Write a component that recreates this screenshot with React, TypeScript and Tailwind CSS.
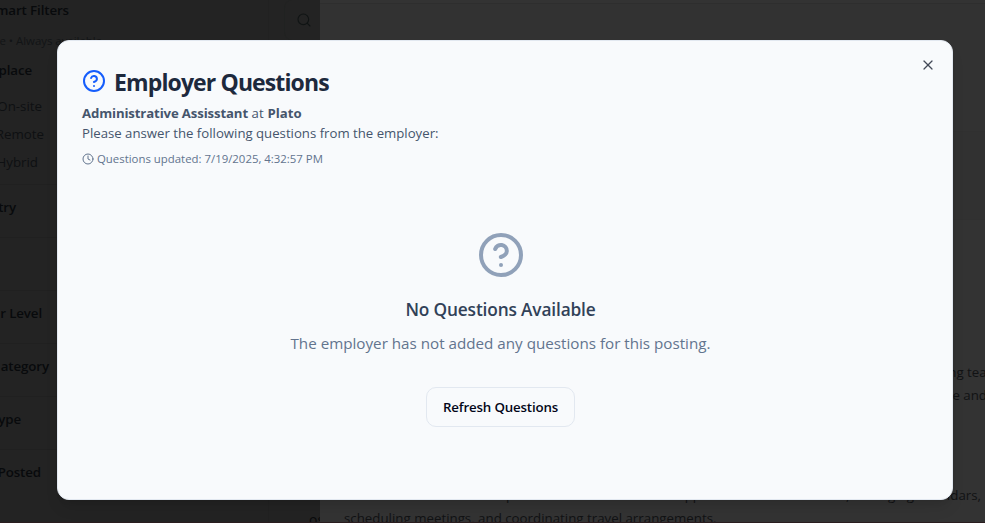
import type { ReactNode } from "react";
import { Search, X, Clock, CircleQuestionMark } from "lucide-react";

function Text({ width, children, className = "", style = "" }: { width: string; children: ReactNode; className?: string; style?: string }) {
  return (
    <div className={`flex shrink-0 items-center justify-end whitespace-nowrap ${width} ${className}`}>
      <span className={style}>{children}</span>
    </div>
  );
}

function FilterGroup({ width, label }: { width: string; label: string }) {
  return (
    <div className="h-[53px] border-t border-[#202020]">
      <Text width={width} className="h-[43px]" style={heading}>{label}</Text>
    </div>
  );
}

const heading = "text-[13.3px] leading-5 font-semibold text-[#080a0c] tracking-[-0.1px]";
const option = "text-[13.3px] leading-5 text-[#0e1012]";

function Sidebar() {
  return (
    <aside className="flex h-full w-[320px] shrink-0 overflow-hidden bg-[#232323]">
      <div className="w-[269px] shrink-0 border-r border-[#212121]">
        <Text width="w-[69px]" className="h-5" style={heading}>mart Filters</Text>
        <Text width="w-[102px]" className="mt-[10px] h-[22px]" style="text-[11.4px] leading-4 text-[#121416]">e • Always available</Text>
        <Text width="w-[32px]" className="mt-[7px] h-[22px]" style={heading}>place</Text>
        <Text width="w-[42px]" className="mt-[11px] h-7" style={option}>On-site</Text>
        <Text width="w-[44px]" className="h-7" style={option}>Remote</Text>
        <Text width="w-[38px]" className="h-7" style={option}>Hybrid</Text>
        <div className="mt-[8px]">
          <FilterGroup width="w-[16px]" label="try" />
          <div className="h-[53px] border-t border-[#202020]" />
          <FilterGroup width="w-[42px]" label="r Level" />
          <FilterGroup width="w-[49px]" label="ategory" />
          <FilterGroup width="w-[21px]" label="ype" />
          <FilterGroup width="w-[41px]" label="Posted" />
        </div>
      </div>
      <div className="flex w-[51px] flex-col justify-between">
        <div className="ml-[15px] flex h-10 items-center rounded-l-lg border-l border-[#202221] pl-[11px]">
          <Search className="size-4 text-[#101414]" strokeWidth={1.7} />
        </div>
        <div className="h-[13px] w-[11px] self-end overflow-hidden whitespace-nowrap text-sm leading-[22px] text-[#090a0b]">os</div>
      </div>
    </aside>
  );
}

function JobDetails() {
  return (
    <main className="flex h-full w-[665px] shrink-0 flex-col overflow-hidden bg-[#333333] text-[13.3px] text-[#111214]">
      <div className="h-1 shrink-0 border-b border-[#2e2e2e]" />
      <div className="h-[127px] shrink-0 bg-[#323232]" />
      <div className="h-[89px] shrink-0 border-y border-[#303030] bg-[#313131]" />
      <div className="mt-[141px] shrink-0 pl-6">
        <Text width="w-[655px]" className="h-[23px]">Join our growing team</Text>
        <Text width="w-[643px]" className="h-[23px]">to manage and</Text>
        <Text width="w-[637px]" className="mt-[77px] h-[23px]">Provide comprehensive administrative support to senior executives, managing calendars,</Text>
        <p className="h-[23px] whitespace-nowrap leading-[22px]">scheduling meetings, and coordinating travel arrangements.</p>
      </div>
    </main>
  );
}

function QuestionsDialog() {
  return (
    <section role="dialog" className="relative flex h-[460px] w-[896px] flex-col rounded-xl border border-slate-200 bg-slate-50 px-6 pt-6 shadow-lg">
      <button className="absolute right-4 top-4 flex size-4 items-center justify-center text-[#424958]" aria-label="Close">
        <X className="size-4" strokeWidth={1.8} />
      </button>
      <header>
        <h2 className="flex h-8 items-center gap-2 text-[23px] font-bold tracking-[-0.88px] text-slate-800">
          <CircleQuestionMark className="size-6 text-blue-600" strokeWidth={2} />
          <span className="mt-[3px]">Employer Questions</span>
        </h2>
        <div className="mt-[6px] text-[13.2px] leading-5 text-slate-600">
          <p><strong className="tracking-[-0.13px]">Administrative Assisstant</strong> <span className="tracking-[0.2px]">at </span><strong>Plato</strong></p>
          <p>Please answer the following questions from the employer:</p>
        </div>
        <p className="mt-2 flex h-4 items-center gap-[3px] text-[11.4px] text-slate-500">
          <Clock className="size-3" />
          <span>Questions updated: 7/19/2025, 4:32:57 PM</span>
        </p>
      </header>
      <div className="flex flex-col items-center pr-[9px] pt-16">
        <CircleQuestionMark className="size-12 text-slate-400" strokeWidth={2} />
        <h3 className="mt-[17px] text-[17.3px] font-semibold leading-7 tracking-[-0.15px] text-slate-700">No Questions Available</h3>
        <p className="mt-[7px] text-[15.2px] leading-6 text-slate-500">The employer has not added any questions for this posting.</p>
        <button className="mt-8 h-10 w-[149px] rounded-[10px] border border-slate-200 pt-px text-[13.3px] font-semibold tracking-[-0.15px] text-slate-950">Refresh Questions</button>
      </div>
    </section>
  );
}

export default function App() {
  return (
    <div className="relative flex h-[523px] w-[985px] overflow-hidden border-b border-[#2a1d1f] bg-[#333333] font-['Open_Sans','Noto_Sans',sans-serif]">
      <Sidebar />
      <JobDetails />
      <div className="absolute left-[57px] top-10">
        <QuestionsDialog />
      </div>
    </div>
  );
}
